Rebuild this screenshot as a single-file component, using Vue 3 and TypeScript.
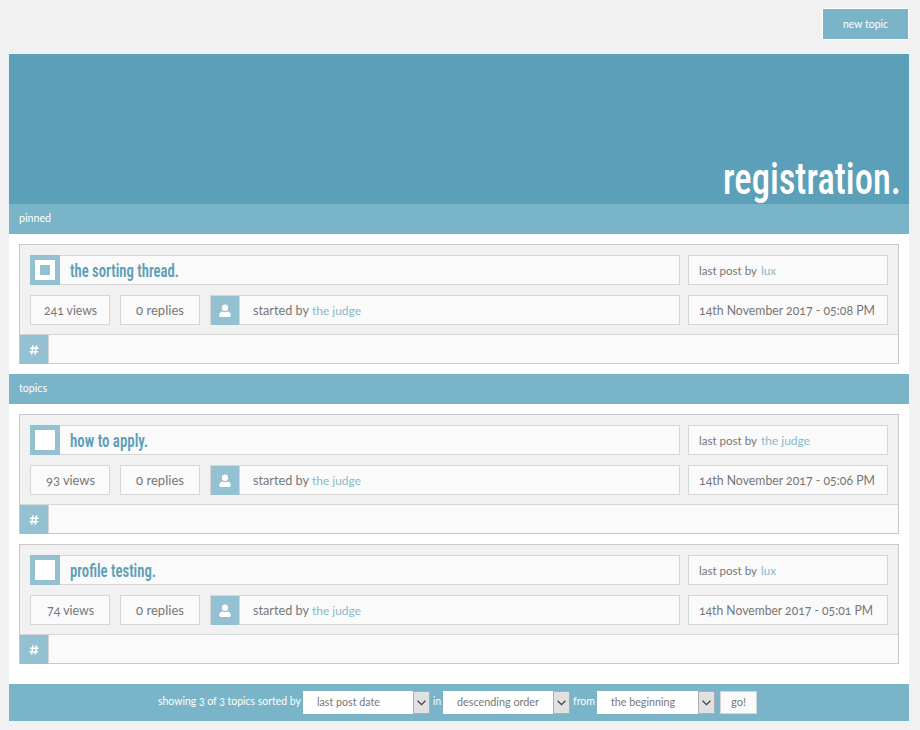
<script setup lang="ts">
import { h, type FunctionalComponent } from 'vue'

interface Topic {
  title: string
  titleWidth: number
  views: string
  viewsWidth: number
  poster: string
  posterWidth: number
  date: string
  dateWidth: number
  pinned: boolean
}

// Inline text run set to an exact width; font and colour are inherited.
const Fit: FunctionalComponent<{ t: string; w: number }> = (props) =>
  h('svg', { class: 'fit', width: props.w, height: 10 }, [
    h('text', { x: 0, y: 10, textLength: props.w, lengthAdjust: 'spacingAndGlyphs' }, props.t),
  ])
Fit.props = ['t', 'w']

const sections: { name: string; width: number; topics: Topic[] }[] = [
  {
    name: 'pinned',
    width: 32,
    topics: [
      { title: 'the sorting thread.', titleWidth: 109, views: '241 views', viewsWidth: 53, poster: 'lux', posterWidth: 15, date: '14th November 2017 - 05:08 PM', dateWidth: 176, pinned: true },
    ],
  },
  {
    name: 'topics',
    width: 28,
    topics: [
      { title: 'how to apply.', titleWidth: 78, views: '93 views', viewsWidth: 49, poster: 'the judge', posterWidth: 49, date: '14th November 2017 - 05:06 PM', dateWidth: 176, pinned: false },
      { title: 'profile testing.', titleWidth: 86, views: '74 views', viewsWidth: 47, poster: 'lux', posterWidth: 15, date: '14th November 2017 - 05:01 PM', dateWidth: 174, pinned: false },
    ],
  },
]

const filters = [
  { label: 'showing 3 of 3 topics sorted by', labelWidth: 143, value: 'last post date', valueWidth: 63, cls: 'sort' },
  { label: 'in', labelWidth: 8, value: 'descending order', valueWidth: 82, cls: 'order' },
  { label: 'from', labelWidth: 22, value: 'the beginning', valueWidth: 64, cls: 'since' },
]
</script>

<template>
  <div class="page">
    <div class="top"><button class="new"><Fit t="new topic" :w="45" /></button></div>
    <main class="forum">
      <h1 class="banner"><Fit t="registration." :w="178" /></h1>
      <template v-for="s in sections" :key="s.name">
        <h2 class="bar"><Fit :t="s.name" :w="s.width" /></h2>
        <div class="list">
          <article v-for="t in s.topics" :key="t.title" class="card">
            <div class="row">
              <div class="box title">
                <span class="marker"><i v-if="t.pinned"></i></span>
                <a class="name"><Fit :t="t.title" :w="t.titleWidth" /></a>
              </div>
              <div class="box last">
                <Fit t="last post by" :w="58" /><a class="link"><Fit :t="t.poster" :w="t.posterWidth" /></a>
              </div>
            </div>
            <div class="row">
              <div class="box stat"><Fit :t="t.views" :w="t.viewsWidth" /></div>
              <div class="box stat"><Fit t="0 replies" :w="48" /></div>
              <div class="box starter">
                <span class="icon">
                  <svg class="user" width="12" height="14" viewBox="0 0 12 14"><ellipse cx="6" cy="3.7" rx="3.1" ry="3.3" /><path d="M3 7.4Q6 9 9 7.4Q11.8 8.2 11.8 11.6Q11.8 13 10.4 13H1.6Q.2 13 .2 11.6Q.2 8.2 3 7.4Z" /></svg>
                </span>
                <span class="by"><Fit t="started by" :w="56" /><a class="link"><Fit t="the judge" :w="49" /></a></span>
              </div>
              <div class="box date"><Fit :t="t.date" :w="t.dateWidth" /></div>
            </div>
            <div class="tags">
              <span class="icon">
                <svg class="hash" width="10" height="10" viewBox="0 0 10 10"><path d="M4 .4 2.6 9.6M7.5.4 6.1 9.6M1 3.3H9.6M.4 6.7H9" /></svg>
              </span>
            </div>
          </article>
        </div>
      </template>
      <footer class="foot">
        <template v-for="f in filters" :key="f.label">
          <span class="label" :class="f.cls + '-label'"><Fit :t="f.label" :w="f.labelWidth" /></span>
          <span class="select" :class="f.cls">
            <span class="value"><Fit :t="f.value" :w="f.valueWidth" /></span>
            <span class="arrow"><svg width="9" height="6" viewBox="0 0 9 6"><path d="M.6.8 4.5 4.7 8.4.8" /></svg></span>
          </span>
        </template>
        <button class="go"><Fit t="go!" :w="15" /></button>
      </footer>
    </main>
  </div>
</template>

<style>
body {
  margin: 0;
  background: #f1f1f1;
}
</style>

<style scoped>
* {
  box-sizing: border-box;
}
.page {
  width: 920px;
  height: 730px;
  padding: 8px 11px 0 9px;
  font: 11px/30px Lato, "Open Sans", sans-serif;
  font-feature-settings: "onum";
  color: #777;
  overflow: hidden;
}
.fit {
  display: block;
  flex: none;
  overflow: visible;
  fill: currentColor;
}
.top {
  display: flex;
  justify-content: flex-end;
  height: 46px;
}
.new {
  width: 87px;
  height: 32px;
  margin: 0;
  padding: 9px 0 0 20px;
  border: 1px solid #fff;
  background: #7ab4c8;
  color: #fff;
  font: inherit;
  display: flex;
  align-items: flex-start;
}
.forum {
  width: 900px;
  background: #fff;
}
.banner {
  height: 150px;
  margin: 0;
  padding: 0 8px 10px;
  display: flex;
  align-items: flex-end;
  justify-content: flex-end;
  background: #5c9fb8;
  color: #fff;
  font: 500 44px Roboto, sans-serif;
  font-stretch: 75%;
}
.bar {
  height: 30px;
  margin: 0;
  padding: 8px 10px 0;
  background: #7ab4c8;
  color: #fff;
  font: inherit;
}
.list {
  display: flex;
  flex-direction: column;
  gap: 10px;
  padding: 10px;
}
.card {
  height: 120px;
  border: 1px solid #c9c9c9;
  background: #f1f1f1;
}
.row {
  display: flex;
  height: 40px;
  padding: 10px 10px 0;
}
.box {
  height: 30px;
  border: 1px solid #d6d6d6;
  background: #fafafa;
  display: flex;
}
.title {
  width: 650px;
  margin-right: 8px;
}
.marker {
  width: 30px;
  height: 30px;
  margin: -1px 0 0 -1px;
  padding: 5px;
  border: 5px solid #93c1d1;
  background: #fff;
}
.marker i {
  display: block;
  width: 10px;
  height: 10px;
  background: #93c1d1;
}
.name {
  padding: 11px 0 0 10px;
  color: #5c9fb8;
  font: 600 17.5px Roboto, sans-serif;
  font-stretch: 75%;
}
.last {
  width: 200px;
  padding: 9px 0 0 10px;
  gap: 4px;
}
.link {
  color: #88b9ca;
  font-size: 11px;
}
.stat {
  width: 80px;
  margin-right: 10px;
  padding-top: 9px;
  justify-content: center;
  font-size: 13px;
}
.starter {
  width: 470px;
  margin-right: 8px;
  font-size: 13px;
}
.icon {
  display: flex;
  align-items: center;
  justify-content: center;
  width: 29px;
  height: 29px;
  border-right: 1px solid #d0d7da;
  background: #93c1d1;
  fill: #fff;
}
.by {
  display: flex;
  gap: 3px;
  padding: 9px 0 0 13px;
}
.date {
  width: 200px;
  padding: 9px 0 0 10px;
  font-size: 13px;
}
.tags {
  height: 29px;
  margin-top: 9px;
  border-top: 1px solid #d6d6d6;
  background: #fafafa;
}
.hash {
  fill: none;
  stroke: #fff;
  stroke-width: 1.5;
}
.foot {
  display: flex;
  height: 37px;
  margin-top: 10px;
  padding: 7px 0 0 149px;
  background: #7ab4c8;
  color: #fff;
}
.label {
  padding-top: 4px;
}
.select {
  display: flex;
  height: 23px;
  margin: 0 3px 0 2px;
  background: #fff;
  color: #777;
}
.value {
  width: 110px;
  padding: 5px 0 0 14px;
}
.order {
  margin-right: 3px;
}
.since {
  margin: 0 5px 0 2px;
}
.since .value {
  width: 101px;
}
.arrow {
  display: flex;
  align-items: center;
  justify-content: center;
  width: 17px;
  border: 1px solid #adadad;
  background: #e1e1e1;
  fill: none;
  stroke: #444;
  stroke-width: 1.3;
}
.go {
  display: flex;
  align-items: flex-start;
  width: 37px;
  height: 23px;
  padding: 4px 0 0 10px;
  border: 1px solid #d6d6d6;
  background: #fafafa;
  color: #777;
  font: inherit;
}
</style>
